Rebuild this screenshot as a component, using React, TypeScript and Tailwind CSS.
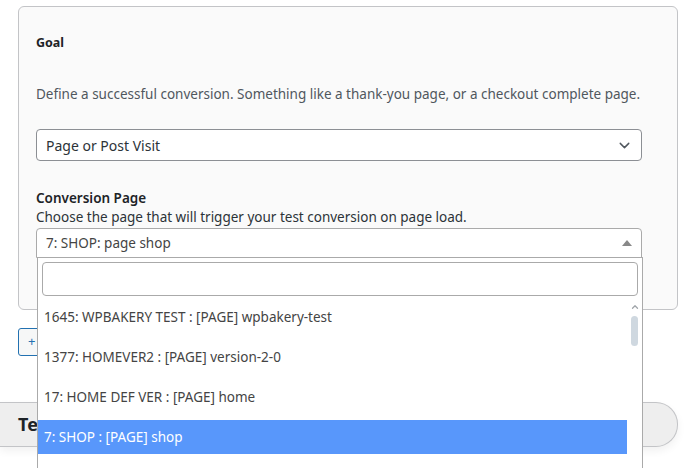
import { ChevronDown, ChevronUp } from "lucide-react";

const options = [
  { id: "1645", label: "1645: WPBAKERY TEST : [PAGE] wpbakery-test" },
  { id: "1377", label: "1377: HOMEVER2 : [PAGE] version-2-0" },
  { id: "17", label: "17: HOME DEF VER : [PAGE] home" },
  { id: "7", label: "7: SHOP : [PAGE] shop", active: true },
];

export default function App() {
  return (
    <div className="relative h-[468px] overflow-hidden bg-white font-['Noto_Sans','Liberation_Sans',sans-serif] text-[13.5px] text-[#1d2327]">
      <section className="ml-[18px] mt-[6px] h-[304px] w-[660px] rounded-md border border-[#c3c4c7] bg-[#fafafa] px-[17px] pt-[27px]">
        <h3 className="text-[12.5px] font-bold leading-[18px]">Goal</h3>
        <p className="mt-[33px] leading-[18px] text-[#50575e]">
          Define a successful conversion. Something like a thank-you page, or a checkout complete page.
        </p>
        <div className="mt-[26px] flex h-[32px] w-[606px] items-center justify-between rounded-[4px] border border-[#8c8f94] bg-white pl-[9px] pr-[8px] text-[14px] text-[#2c3338]">
          <span>Page or Post Visit</span>
          <ChevronDown className="h-[17px] w-[17px] text-[#50575e]" strokeWidth={2} />
        </div>
        <label className="mt-[28px] block font-semibold leading-[19px]">Conversion Page</label>
        <p className="leading-[19px] text-[#2c3338]">Choose the page that will trigger your test conversion on page load.</p>
        <div className="mt-[1px] flex h-[30px] w-[606px] items-center justify-between rounded-t-[4px] border border-[#aaa] bg-white pl-[9px] pr-[9px] text-[#444]">
          <span>7: SHOP: page shop</span>
          <span className="h-0 w-0 border-x-[5px] border-b-[6px] border-x-transparent border-b-[#888]" />
        </div>
      </section>

      <button className="ml-[18px] mt-[18px] h-[28px] w-[60px] rounded-[3px] border border-[#2271b1] bg-[#f6f7f7] pl-[9px] text-left text-[13px] text-[#2271b1]">
        +
      </button>

      <div className="mt-[46px] flex h-[45px] w-[678px] items-center rounded-r-[22px] border-y border-r border-[#c3c4c7] bg-[#eeeeee] pl-[18px] shadow-[0_4px_8px_rgba(0,0,0,0.06)]">
        <span className="text-[18px] font-bold text-[#1d2327]">Test Results</span>
      </div>

      <div className="absolute left-[37px] top-[257px] h-[230px] w-[606px] border-x border-t border-[#aaa] bg-white">
        <div className="p-[4px]">
          <div className="h-[34px] rounded-[4px] border border-[#aaa]" />
        </div>
        <div className="flex">
          <ul className="w-[589px] text-[#444]">
            {options.map((o) => (
              <li
                key={o.id}
                className={`mb-[6px] flex h-[34px] items-center pl-[6px] ${o.active ? "bg-[#5897fb] text-white" : ""}`}
              >
                {o.label}
              </li>
            ))}
          </ul>
          <div className="flex w-[15px] flex-col items-center">
            <ChevronUp className="mt-[2px] h-[10px] w-[10px] text-[#a0a5aa]" strokeWidth={3} />
            <div className="mt-[4px] h-[30px] w-[7px] rounded-full bg-[#cfd8e0]" />
          </div>
        </div>
      </div>
    </div>
  );
}
